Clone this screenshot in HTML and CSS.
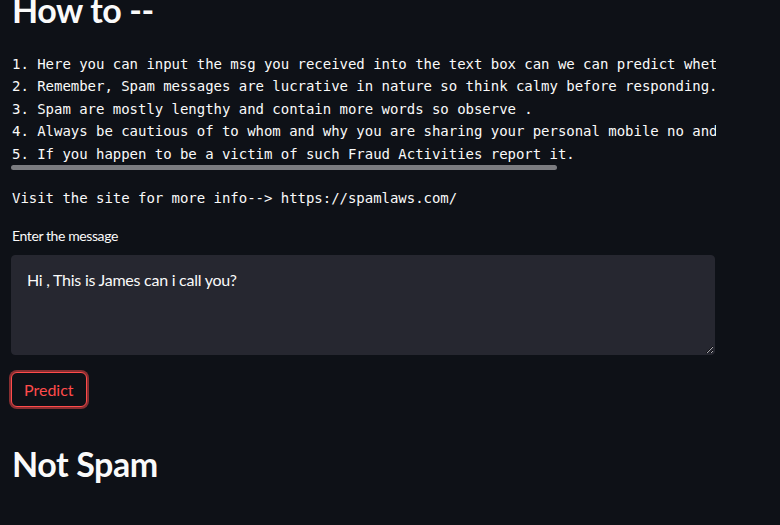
FILE: index.html
```html
<!DOCTYPE html>
<html>
<head>
<meta charset="utf-8">
<link rel="stylesheet" href="styles.css">
</head>
<body>
<main class="main">
  <h2 class="heading">How to --</h2>
  <div class="code-box">
    <pre class="code">1. Here you can input the msg you received into the text box can we can predict whether it is spam or not.
2. Remember, Spam messages are lucrative in nature so think calmy before responding.
3. Spam are mostly lengthy and contain more words so observe .
4. Always be cautious of to whom and why you are sharing your personal mobile no and bank details.
5. If you happen to be a victim of such Fraud Activities report it.</pre>
    <div class="scroll-thumb"></div>
  </div>
  <p class="visit">Visit the site for more info--&gt; https://spamlaws.com/</p>
  <label class="label" for="msg">Enter the message</label>
  <textarea id="msg" class="textarea">Hi , This is James can i call you?</textarea>
  <button class="button">Predict</button>
  <h2 class="heading result">Not Spam</h2>
</main>
</body>
</html>
```

FILE: styles.css
```css
html, body {
  margin: 0;
  padding: 0;
  background: #0e1117;
  color: #fafafa;
  font-family: "Lato", "Noto Sans", sans-serif;
  overflow: hidden;
}

.main {
  display: flex;
  flex-direction: column;
  align-items: flex-start;
  padding-left: 12px;
  margin-top: -12px;
}

.heading {
  font-size: 34px;
  font-weight: 700;
  line-height: 43px;
  margin: 0;
  letter-spacing: -0.4px;
}

.code-box {
  margin-top: 22px;
  width: 704px;
  display: flex;
  flex-direction: column;
}

.code {
  margin: 0;
  overflow: hidden;
  font-family: "DejaVu Sans Mono", "Liberation Mono", monospace;
  font-size: 14px;
  line-height: 22.4px;
  letter-spacing: -0.03px;
  color: #fafafa;
}

.scroll-thumb {
  margin-left: -1px;
  width: 546px;
  height: 5px;
  background: #7b7c80;
  border-radius: 3px;
}

.visit {
  margin: 17px 0 0 0;
  font-family: "DejaVu Sans Mono", "Liberation Mono", monospace;
  font-size: 14px;
  line-height: 22.4px;
  letter-spacing: -0.03px;
  white-space: pre;
}

.label {
  margin-top: 16px;
  font-size: 14px;
  line-height: 22px;
  letter-spacing: -0.4px;
  color: #fafafa;
}

.textarea {
  margin: 8px 0 0 -1px;
  width: 704px;
  height: 100px;
  box-sizing: border-box;
  background: #262730;
  color: #fafafa;
  border: 1px solid #262730;
  border-radius: 4px;
  padding: 13px 15px;
  font-family: "Lato", "Noto Sans", sans-serif;
  font-size: 16px;
  line-height: 22.4px;
  letter-spacing: -0.25px;
  outline: none;
  resize: vertical;
}

.button {
  margin: 17px 0 0 -1px;
  height: 35px;
  padding: 0 12px;
  background: #0e1117;
  color: #ff4b4b;
  border: 1px solid #ff4b4b;
  border-radius: 6px;
  box-shadow: 0 0 0 2px rgba(255, 75, 75, 0.5);
  font-family: "Lato", "Noto Sans", sans-serif;
  font-size: 16px;
}

.result {
  margin-top: 35px;
}
```
